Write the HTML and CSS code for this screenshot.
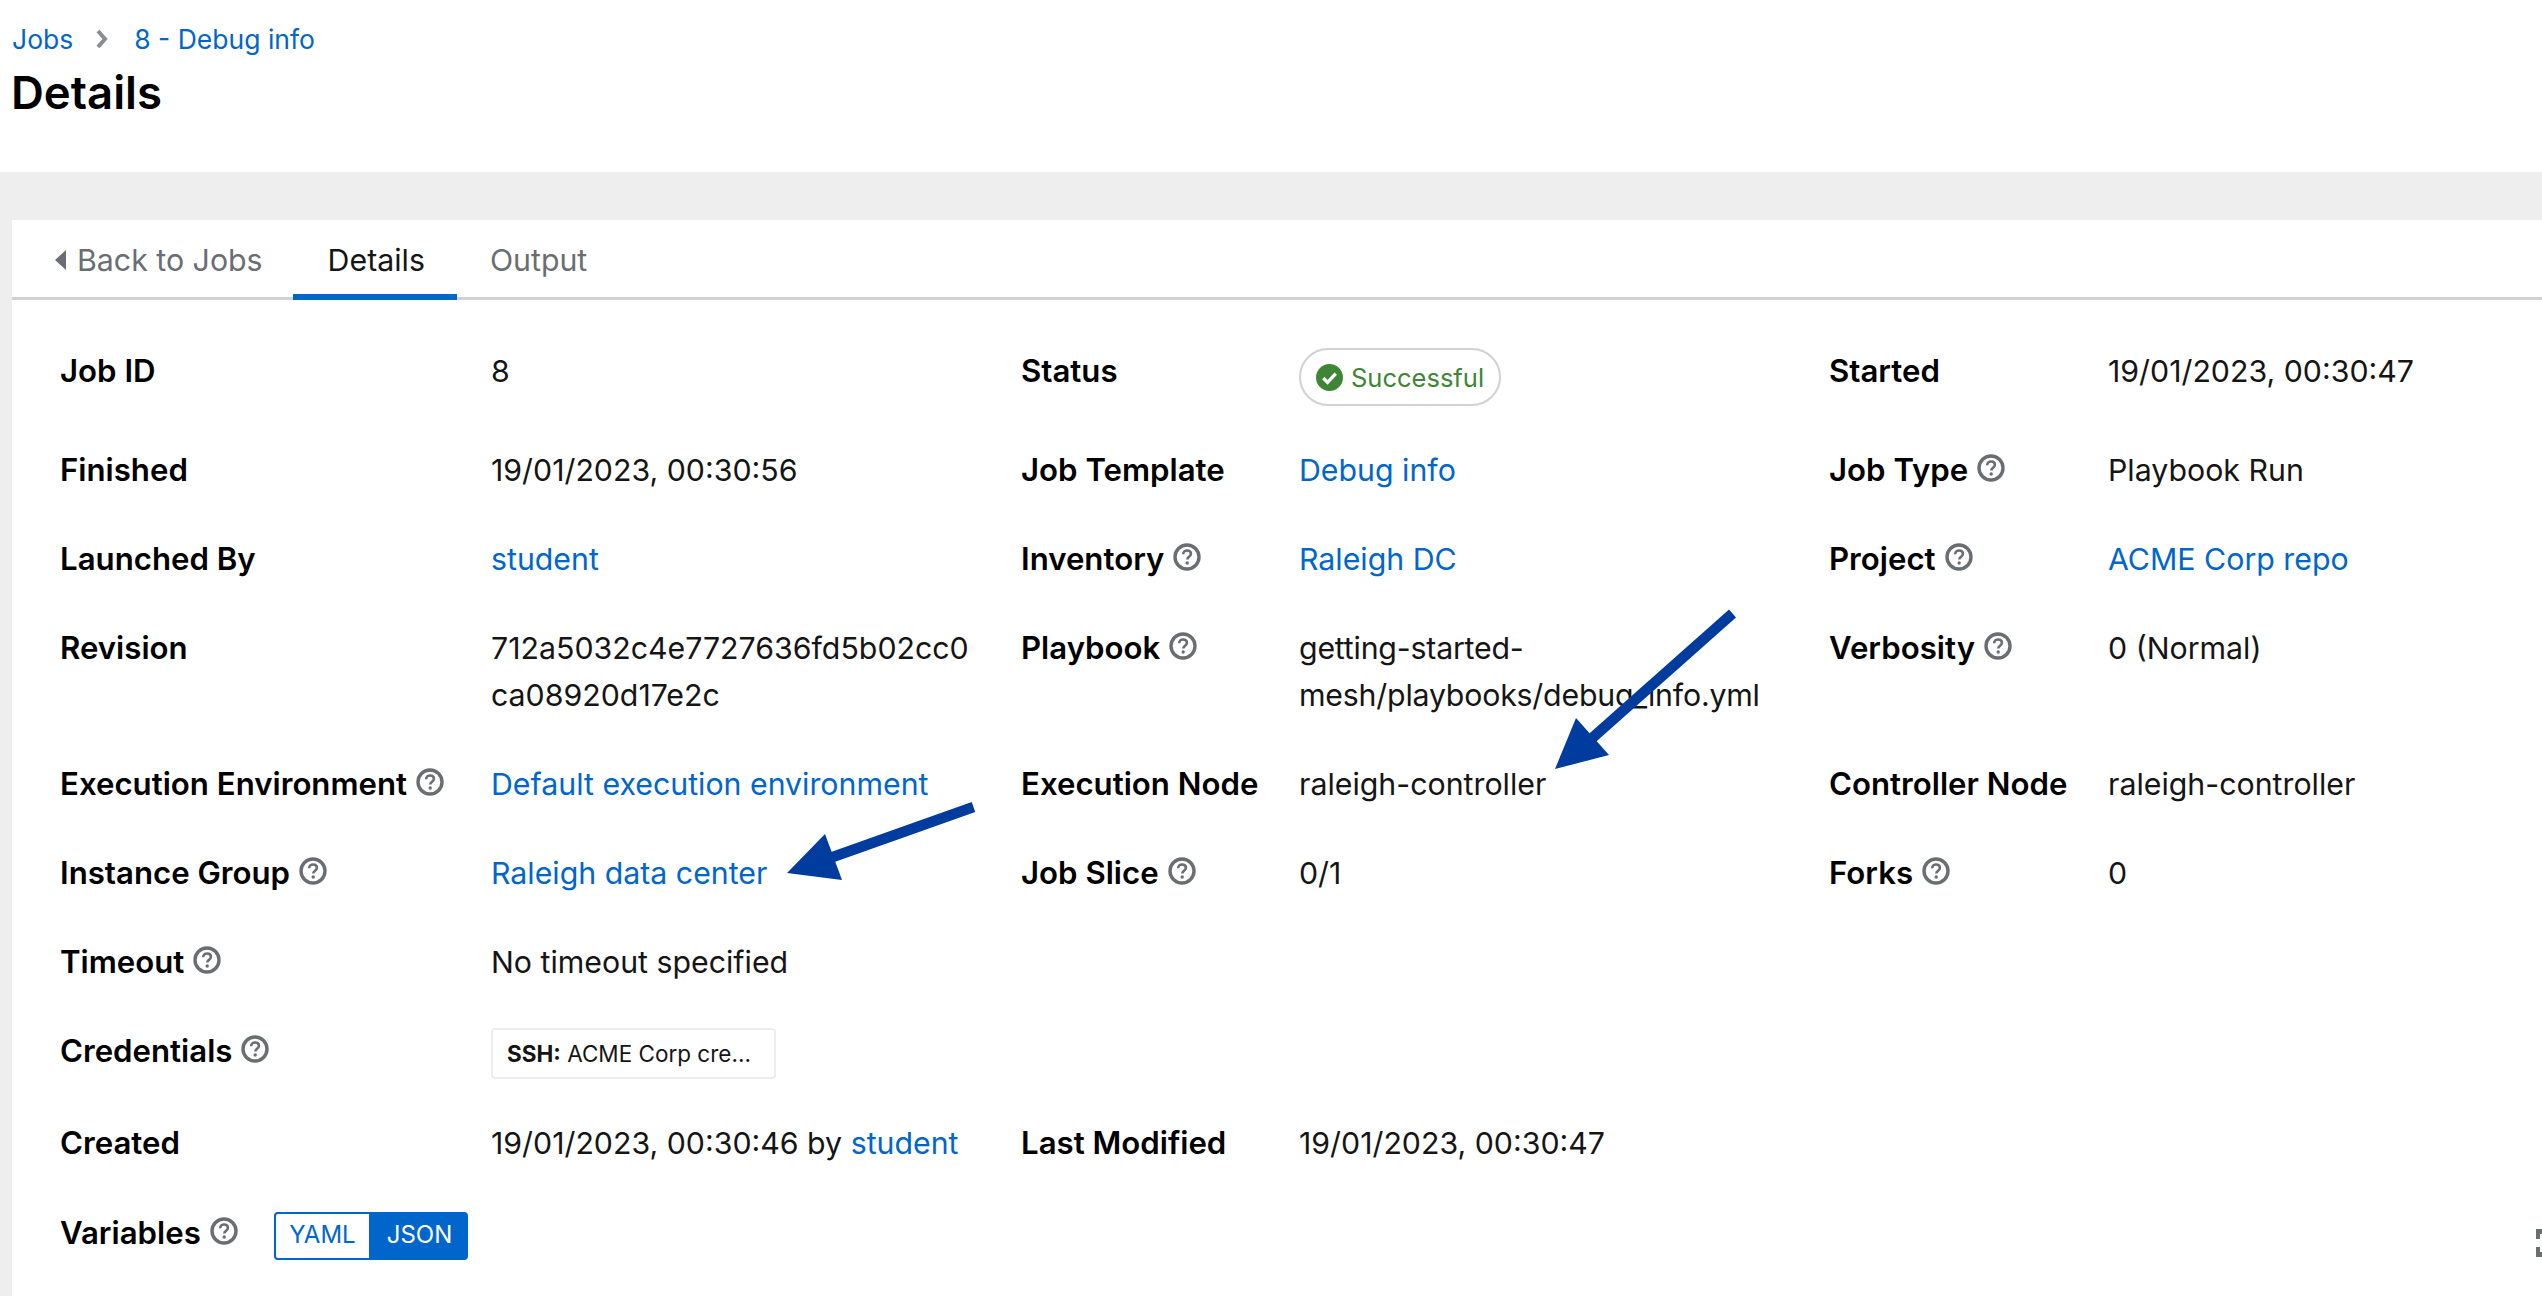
FILE: index.html
```html
<!DOCTYPE html>
<html lang="en">
<head>
    <meta charset="UTF-8">
    <title>Details - Jobs</title>
    <link rel="stylesheet" href="styles.css">
</head>
<body>
    <header class="page-header">
        <nav class="breadcrumb">
            <a href="#">Jobs</a>
            <svg class="crumb-sep" viewBox="0 0 14 22"><path d="M3 3l7 8-7 8" fill="none" stroke="#8a8d90" stroke-width="4"/></svg>
            <a href="#">8 - Debug info</a>
        </nav>
        <h1>Details</h1>
    </header>

    <main class="band">
        <section class="card">
            <div class="tabs">
                <a class="tab back" href="#"><svg class="back-caret" viewBox="0 0 12 20"><path d="M11 0v20L0 10z" fill="#6a6e73"/></svg>Back to Jobs</a>
                <a class="tab active" href="#">Details</a>
                <a class="tab" href="#">Output</a>
            </div>

            <dl class="details">
                <dt>Job ID</dt>
                <dd>8</dd>
                <dt>Status</dt>
                <dd><span class="status-pill"><svg viewBox="0 0 28 28"><circle cx="14" cy="14" r="14" fill="#3e8635"/><path d="M7.5 14.5l4.5 4.5 8.5-9" fill="none" stroke="#fff" stroke-width="3.4"/></svg>Successful</span></dd>
                <dt>Started</dt>
                <dd>19/01/2023, 00:30:47</dd>

                <dt>Finished</dt>
                <dd>19/01/2023, 00:30:56</dd>
                <dt>Job Template</dt>
                <dd><a href="#">Debug info</a></dd>
                <dt>Job Type <svg class="help"><use href="#help-icon"/></svg></dt>
                <dd>Playbook Run</dd>

                <dt>Launched By</dt>
                <dd><a href="#">student</a></dd>
                <dt>Inventory <svg class="help"><use href="#help-icon"/></svg></dt>
                <dd><a href="#">Raleigh DC</a></dd>
                <dt>Project <svg class="help"><use href="#help-icon"/></svg></dt>
                <dd><a href="#">ACME Corp repo</a></dd>

                <dt>Revision</dt>
                <dd>712a5032c4e7727636fd5b02cc0<br>ca08920d17e2c</dd>
                <dt>Playbook <svg class="help"><use href="#help-icon"/></svg></dt>
                <dd class="tight">getting-started-<br>mesh/playbooks/debug_info.yml</dd>
                <dt>Verbosity <svg class="help"><use href="#help-icon"/></svg></dt>
                <dd>0 (Normal)</dd>

                <dt>Execution Environment <svg class="help"><use href="#help-icon"/></svg></dt>
                <dd><a href="#">Default execution environment</a></dd>
                <dt>Execution Node</dt>
                <dd>raleigh-controller</dd>
                <dt>Controller Node</dt>
                <dd>raleigh-controller</dd>

                <dt>Instance Group <svg class="help"><use href="#help-icon"/></svg></dt>
                <dd><a href="#">Raleigh data center</a></dd>
                <dt>Job Slice <svg class="help"><use href="#help-icon"/></svg></dt>
                <dd>0/1</dd>
                <dt>Forks <svg class="help"><use href="#help-icon"/></svg></dt>
                <dd>0</dd>

                <dt>Timeout <svg class="help"><use href="#help-icon"/></svg></dt>
                <dd class="wide">No timeout specified</dd>

                <dt>Credentials <svg class="help"><use href="#help-icon"/></svg></dt>
                <dd class="wide"><span class="cred-chip"><b>SSH:</b> ACME Corp cre...</span></dd>

                <dt>Created</dt>
                <dd>19/01/2023, 00:30:46 by <a href="#">student</a></dd>
                <dt>Last Modified</dt>
                <dd class="span-rest">19/01/2023, 00:30:47</dd>
            </dl>

            <div class="variables">
                <span class="var-label">Variables <svg class="help"><use href="#help-icon"/></svg></span>
                <div class="toggle">
                    <button type="button">YAML</button>
                    <button type="button" class="on">JSON</button>
                </div>
            </div>
        </section>
    </main>

    <!-- annotation arrows drawn over the screenshot -->
    <svg class="arrows" viewBox="0 0 2542 1296">
        <path d="M1732.5 613.5L1590 740" stroke="#003c9d" stroke-width="10.5" fill="none"/>
        <path d="M1555 769L1576 718 1609 755z" fill="#003c9d"/>
        <path d="M973.5 807L830 858" stroke="#003c9d" stroke-width="10.5" fill="none"/>
        <path d="M787 873L825 834 842 880z" fill="#003c9d"/>
    </svg>

    <svg class="expand-icon" viewBox="0 0 20 28"><path d="M0 0h9v5H4v5H0zM0 28v-10h4v5h5v5z" fill="#6a6e73"/></svg>

    <svg width="0" height="0" class="defs">
        <symbol id="help-icon" viewBox="0 0 28 28">
            <circle cx="14" cy="14" r="12" fill="none" stroke="#6a6e73" stroke-width="3.4"/>
            <path d="M10.2 11.2c0-2.4 1.7-3.7 3.9-3.7s3.8 1.3 3.8 3.3c0 2.9-3.6 2.9-3.6 5.6" fill="none" stroke="#6a6e73" stroke-width="2.6"/>
            <circle cx="14.2" cy="20" r="1.7" fill="#6a6e73"/>
        </symbol>
    </svg>
</body>
</html>
```

FILE: styles.css
```css
html, body {
    margin: 0;
    height: 100%;
    overflow: hidden;
}
body {
    position: relative;
    font-family: "Inter", "Open Sans", sans-serif;
    font-size: 30.3px;
    color: #151515;
    background: #fff;
}
a {
    color: #0066cc;
    text-decoration: none;
}
.page-header {
    height: 172px;
    box-sizing: border-box;
    padding: 19px 11px 0 12px;
}
.breadcrumb {
    display: flex;
    align-items: center;
    height: 40px;
    font-size: 26.5px;
}
.crumb-sep {
    width: 14px;
    height: 22px;
    margin: 0 25px 0 22px;
}
h1 {
    margin: 4px 0 0 -1px;
    font-size: 45.5px;
    font-weight: 600;
    line-height: 60px;
    color: #000;
}
.band {
    background: #eeeeee;
    height: 1124px;
    padding: 48px 0 0 12px;
    box-sizing: border-box;
}
.card {
    background: #fff;
    height: 100%;
}
.tabs {
    display: flex;
    height: 80px;
    box-sizing: border-box;
    padding-left: 10px;
    border-bottom: 3px solid #d2d2d2;
}
.tab {
    display: flex;
    align-items: center;
    height: 80px;
    box-sizing: border-box;
    padding: 0 33px;
    color: #6a6e73;
}
.tab.back {
    padding-right: 30px;
}
.tab.active {
    color: #151515;
    border-bottom: 6px solid #0066cc;
    padding: 6px 32px 0 35px;
}
.back-caret {
    width: 12px;
    height: 20px;
    margin-right: 10px;
}
.details {
    display: grid;
    grid-template-columns: 431px 530px 278px 530px 279px auto;
    grid-auto-rows: minmax(47px, auto);
    row-gap: 42px;
    margin: 48px 0 0;
    padding-left: 48px;
    line-height: 47px;
    align-items: start;
}
dt {
    font-size: 31.2px;
    font-weight: 600;
    color: #000;
    display: flex;
    align-items: center;
    gap: 9px;
}
dd {
    margin: 0;
}
.tight {
    letter-spacing: -0.2px;
}
.wide {
    grid-column: 2 / -1;
}
.span-rest {
    grid-column: 4 / -1;
}
.help {
    width: 28px;
    height: 28px;
    margin-top: -5px;
}
.status-pill {
    display: inline-flex;
    align-items: center;
    gap: 8px;
    height: 58px;
    margin-bottom: -1px;
    padding: 0 15px;
    box-sizing: border-box;
    border: 2px solid #d2d2d2;
    border-radius: 29px;
    color: #3e8635;
    font-size: 25.5px;
}
.status-pill svg {
    width: 27px;
    height: 27px;
}
.cred-chip {
    display: block;
    width: 285px;
    height: 51px;
    margin-bottom: -1px;
    box-sizing: border-box;
    padding: 0 14px;
    border: 2px solid #ededed;
    border-radius: 4px;
    font-size: 22.5px;
    line-height: 47px;
    white-space: nowrap;
}
.variables {
    display: flex;
    align-items: center;
    margin-top: 45px;
    padding-left: 48px;
}
.var-label {
    display: flex;
    align-items: center;
    gap: 9px;
    width: 214px;
    margin-bottom: 6px;
    font-size: 31.2px;
    font-weight: 600;
    color: #000;
}
.toggle {
    display: flex;
    width: 194px;
    height: 48px;
}
.toggle button {
    flex: 1;
    border: 2px solid #0066cc;
    background: #fff;
    color: #0066cc;
    font: inherit;
    font-size: 24px;
    padding: 0 0 3px;
}
.toggle button:first-child {
    border-radius: 4px 0 0 4px;
}
.toggle button.on {
    background: #0066cc;
    color: #fff;
    border-radius: 0 4px 4px 0;
}
.arrows {
    position: absolute;
    left: 0;
    top: 0;
    width: 2542px;
    height: 1296px;
    pointer-events: none;
}
.expand-icon {
    position: absolute;
    left: 2536px;
    top: 1229px;
    width: 20px;
    height: 28px;
}
.defs {
    position: absolute;
}
```
